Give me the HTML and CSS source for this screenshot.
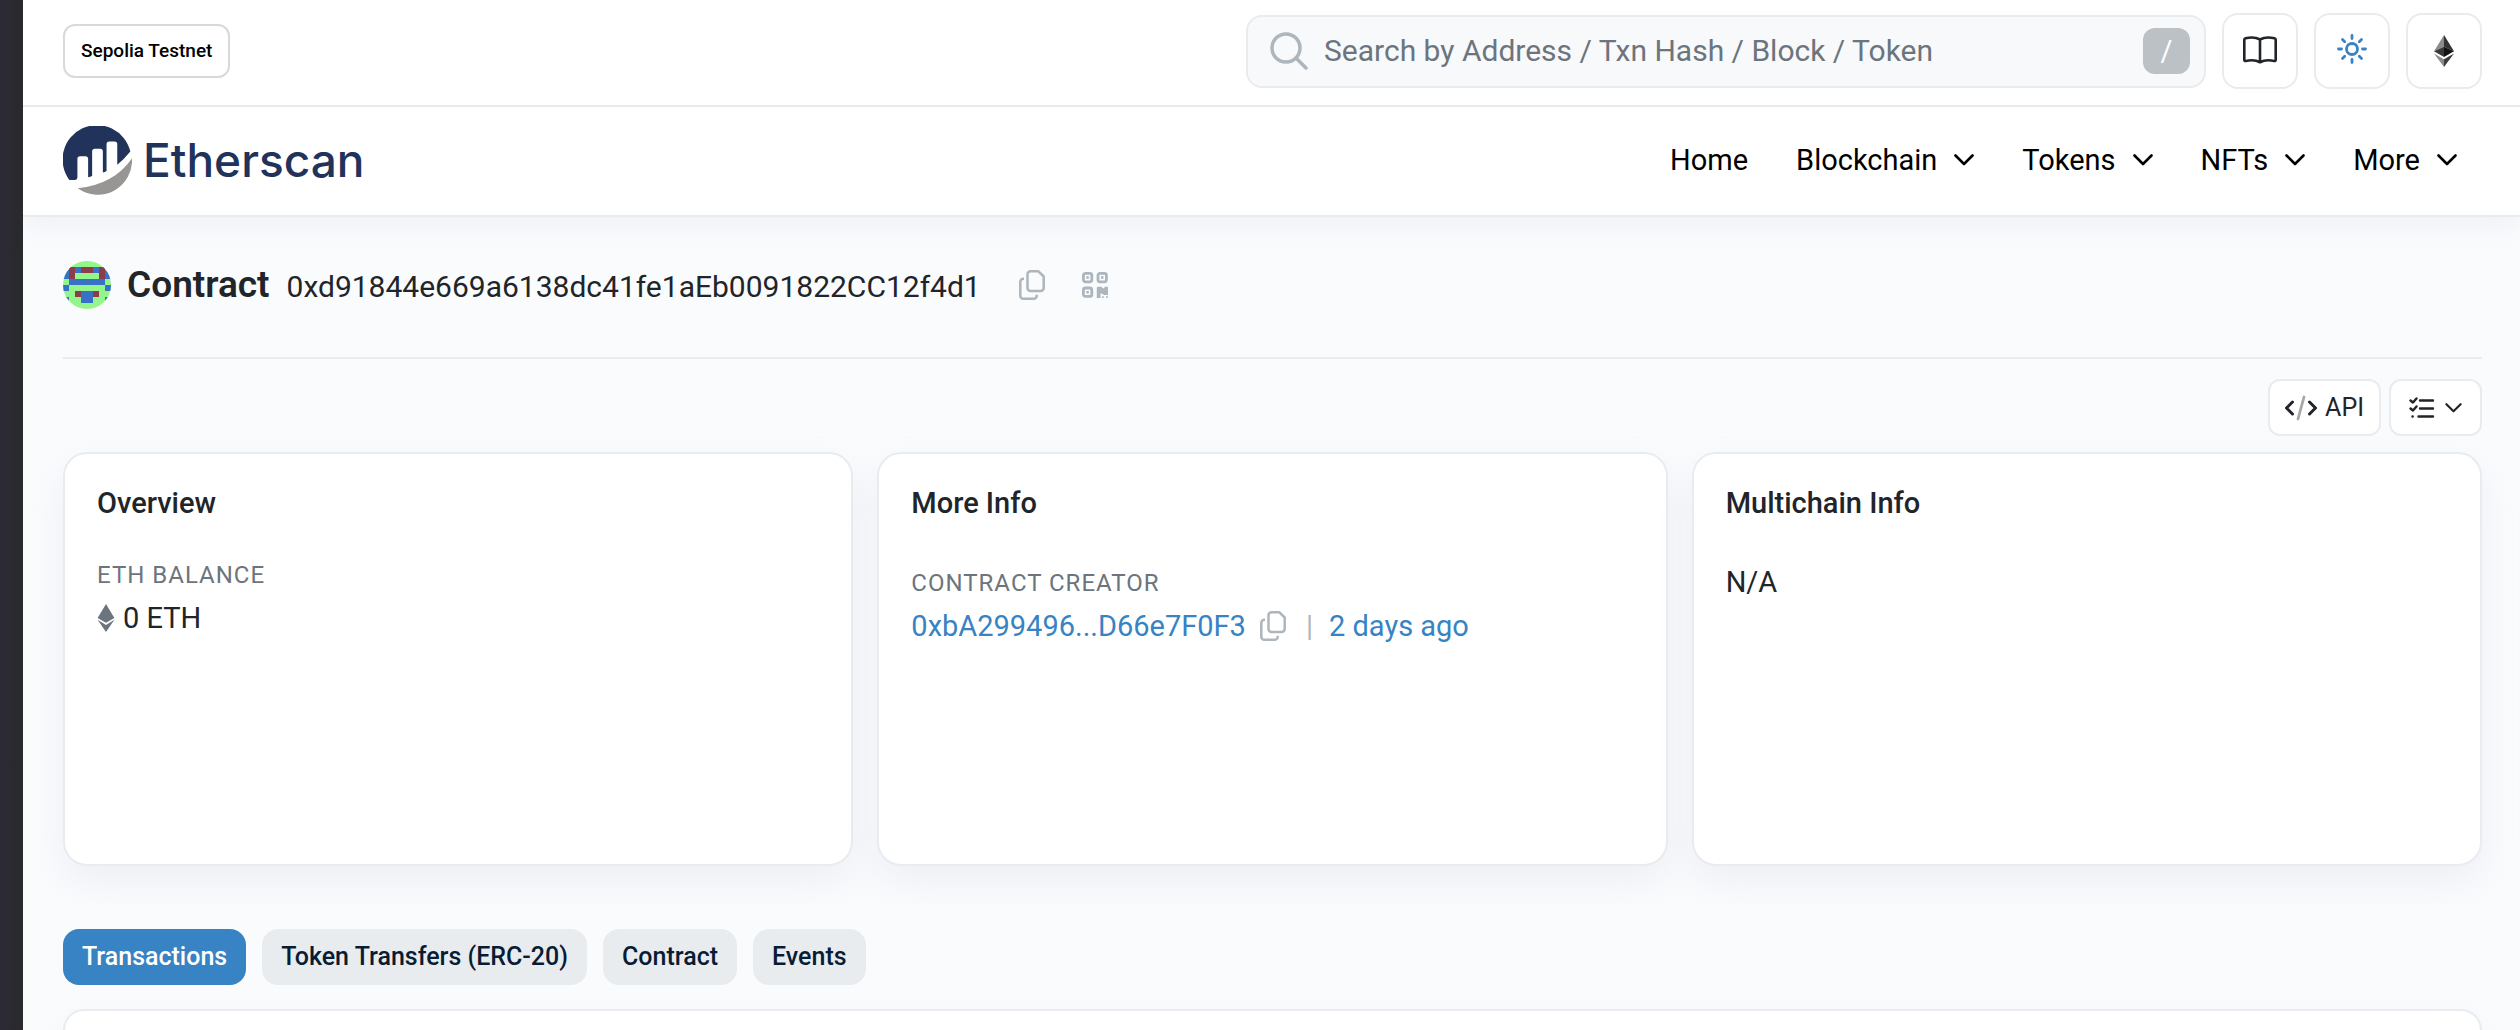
FILE: index.html
```html
<!DOCTYPE html>
<html lang="en">
<head>
<meta charset="utf-8">
<title>Contract Address | Etherscan</title>
<link rel="stylesheet" href="styles.css">
</head>
<body>
<svg class="sprite" aria-hidden="true">
  <symbol id="chevron" viewBox="0 0 20 12"><path d="M1.5 1.5 10 10l8.500-8.500" fill="none" stroke="currentColor" stroke-width="2.600" stroke-linecap="round" stroke-linejoin="round"/></symbol>
  <symbol id="copy" viewBox="0 0 26 30"><path d="M11.500 1.300h8l5.200 5.200v11.500a3 3 0 0 1-3 3H11.500a3 3 0 0 1-3-3V4.300a3 3 0 0 1 3-3zM5 8.700h-.7a3 3 0 0 0-3 3v14a3 3 0 0 0 3 3h10.400a3 3 0 0 0 3-3v-1" fill="none" stroke="currentColor" stroke-width="2.500" stroke-linejoin="round"/></symbol>
</svg>
<div class="edge"></div>
<div class="page">
  <header class="header">
    <div class="topbar">
      <span class="network">Sepolia Testnet</span>
      <div class="tools">
        <label class="search">
          <svg width="38" height="38" viewBox="0 0 38 38" fill="none" stroke="#adb5bd" stroke-width="3.500" stroke-linecap="round"><circle cx="16" cy="16" r="14"/><path d="m26 26 10 10"/></svg>
          <input type="text" placeholder="Search by Address / Txn Hash / Block / Token" aria-label="Search">
          <kbd class="key">/</kbd>
        </label>
        <button class="tool" aria-label="Docs">
          <svg width="34" height="30" viewBox="0 0 34 30" fill="none" stroke="#212529" stroke-width="2.600" stroke-linejoin="round"><path d="M17 3.500C13 1.300 7 1.300 2.500 2.300q-1.200.3-1.200 1.500v20q0 1.500 1.400 1.200C8 23.800 13 24 17 26.300c4-2.300 9-2.500 14.300-1.300q1.400.3 1.400-1.200v-20q0-1.200-1.200-1.500C27 1.300 21 1.300 17 3.500zM17 3.500v22.800"/></svg>
        </button>
        <button class="tool" aria-label="Theme">
          <svg width="30" height="34" viewBox="0 0 30 34" fill="none" stroke="#3783c3" stroke-width="2.800" stroke-linecap="round"><circle cx="15" cy="15" r="5.500"/><path d="M15 1.500v3M15 25.500v3M1.500 15h3M25.500 15h3M5.500 5.500l2.200 2.200M22.300 22.300l2.200 2.200M24.500 5.500l-2.200 2.200M7.700 22.300l-2.200 2.200"/></svg>
        </button>
        <button class="tool" aria-label="Networks">
          <svg width="20" height="32" viewBox="0 0 20 32"><path d="M10 0 0 16.300l10-4.600z" fill="#8c8c8c"/><path d="m10 0 10 16.300-10-4.600z" fill="#343434"/><path d="M10 11.700 0 16.300 10 22z" fill="#393939"/><path d="m10 11.700 10 4.600L10 22z" fill="#141414"/><path d="m0 18.500 10 5.800V32z" fill="#8c8c8c"/><path d="m20 18.500-10 5.800V32z" fill="#3c3c3b"/></svg>
        </button>
      </div>
    </div>
    <div class="navbar">
      <a class="logo" href="#">
        <svg width="69" height="69" viewBox="0 0 206 206"><path fill="#21325b" d="M19 161A102.500 102.500 0 1 1 201 76Q183 98 162 116V54q0-8-8-8h-16q-8 0-8 8v80q-5 3-11 5V76q0-8-8-8H95q-8 0-8 8v73q-6 3-12 4V98q0-8-8-8H51q-8 0-8 8v56q0 7-7 7z"/><path fill="#979695" d="M44 186Q154 173 206 96A102.500 102.500 0 0 1 44 186z"/></svg>
        <span>Etherscan</span>
      </a>
      <nav class="nav">
        <a href="#">Home</a>
        <a href="#">Blockchain <svg class="chevron"><use href="#chevron"/></svg></a>
        <a href="#">Tokens <svg class="chevron"><use href="#chevron"/></svg></a>
        <a href="#">NFTs <svg class="chevron"><use href="#chevron"/></svg></a>
        <a href="#">More <svg class="chevron"><use href="#chevron"/></svg></a>
      </nav>
    </div>
  </header>
  <main class="main">
    <div class="heading">
      <svg class="avatar" viewBox="0 0 8 8" shape-rendering="crispEdges"><path fill="#94f58a" d="M0 0h8v8H0z"/><path fill="#3872c8" d="M0 1h8v2H0zM1 3h6v1H1zM0 4h1v1H0zM7 4h1v1H7zM3 5h2v2H3zM0 6h1v1H0zM7 6h1v1H7z"/><path fill="#94f58a" d="M2 2h4v1H2z"/><path fill="#8e3b4a" d="M1 1h1v2H1zM3 1h2v1H3zM6 1h1v2H6zM2 5h1v1H2zM5 5h1v1H5z"/></svg>
      <h1>Contract</h1>
      <span class="address">0xd91844e669a6138dc41fe1aEb0091822CC12f4d1</span>
      <button class="plain" aria-label="Copy address"><svg class="copy"><use href="#copy"/></svg></button>
      <button class="plain" aria-label="Show QR code">
        <svg width="26" height="26" viewBox="0 0 26 26" fill="none" stroke="#adb5bd" stroke-width="2.800"><rect x="1.400" y="1.400" width="8.400" height="8.400" rx="2"/><rect x="16" y="1.400" width="8.400" height="8.400" rx="2"/><rect x="1.400" y="16" width="8.400" height="8.400" rx="2"/><path fill="#adb5bd" stroke="none" d="M4.300 4.300h2.500v2.500H4.300zM19 4.300h2.500v2.500H19zM4.300 19h2.500v2.500H4.300zM14.800 16q0-1.300 1.300-1.300h3.500q1 2.300 2.600 1.300l.5-1.300H26v8.300h-4q-1.500-2-3.500-1.500V26h-3.700zM20 24.300h1.700V26H20zM24 24.300h1.700V26H24z"/></svg>
      </button>
    </div>
    <div class="actions">
      <button class="action api">
        <svg width="32" height="26" viewBox="0 0 32 26" fill="none" stroke-linecap="round" stroke-linejoin="round"><path d="m7.500 7-6 6 6 6M24.500 7l6 6-6 6" stroke="#212529" stroke-width="3"/><path d="M19 2l-6 22" stroke="#a8a8a9" stroke-width="2.800"/></svg>
        API
      </button>
      <button class="action list" aria-label="View options">
        <svg width="26" height="22" viewBox="0 0 26 22" fill="none" stroke="#212529" stroke-width="2.400" stroke-linecap="round" stroke-linejoin="round"><path d="M11 3.500h13M11 11.500h13M9.500 19.500H24M1.500 3.500 4 5.500l3.500-4M1.500 11.500l2.500 2 3.500-4M3.500 19.500h.2"/></svg>
        <svg class="chevron small"><use href="#chevron"/></svg>
      </button>
    </div>
    <div class="cards">
      <section class="card">
        <h2>Overview</h2>
        <h3>ETH Balance</h3>
        <p><svg class="eth" viewBox="0 0 18 30" fill="#6c757d"><path d="m9 0 9 15-9 5-9-5zM0 17l9 5.500 9-5.500-9 13z"/></svg> 0 ETH</p>
      </section>
      <section class="card">
        <h2>More Info</h2>
        <h3 class="spaced">Contract Creator</h3>
        <p><a href="#">0xbA299496...D66e7F0F3</a><button class="plain copy-creator" aria-label="Copy creator"><svg class="copy"><use href="#copy"/></svg></button><span class="divider">|</span><a href="#">2 days ago</a></p>
      </section>
      <section class="card">
        <h2>Multichain Info</h2>
        <p>N/A</p>
      </section>
    </div>
    <div class="tabs">
      <button class="tab active">Transactions</button>
      <button class="tab">Token Transfers (ERC-20)</button>
      <button class="tab">Contract</button>
      <button class="tab">Events</button>
    </div>
    <section class="panel"></section>
  </main>
</div>
</body>
</html>
```

FILE: styles.css
```css
* { box-sizing: border-box; }

body {
  margin: 0;
  min-height: 100vh;
  display: flex;
  font-family: Roboto, "Liberation Sans", sans-serif;
  font-size: 29px;
  line-height: 44px;
  color: #212529;
  background: #fafbfd;
}

h1, h2, h3, p { margin: 0; font-weight: 500; }
p { font-weight: 400; }
a { color: #3783c3; text-decoration: none; }
button, input { font: inherit; color: inherit; }
button { cursor: pointer; }
svg { flex: none; }
.sprite { position: absolute; width: 0; height: 0; }

.edge {
  flex: none;
  width: 23px;
  background: linear-gradient(90deg, #2c2a35 0, #2b2930 14px, #2a292c 100%);
}

.page { flex: 1; min-width: 0; display: flex; flex-direction: column; overflow: hidden; }

/* Header */
.header {
  background: #fff;
  border-bottom: 2px solid #e9ecef;
  box-shadow: 0 12px 24px rgba(189, 197, 209, 0.15);
}
.topbar {
  display: flex;
  align-items: center;
  justify-content: space-between;
  padding: 13px 38px 16px 40px;
  border-bottom: 2px solid #e9ecef;
}
.network {
  padding: 13px 16px;
  border: 2px solid #d9d9d9;
  border-radius: 12px;
  font-size: 19px;
  line-height: 24px;
  font-weight: 500;
  color: #000;
}
.tools { display: flex; align-items: center; gap: 16px; width: 52%; max-width: 1236px; }
.search {
  flex: 1;
  display: flex;
  align-items: center;
  gap: 16px;
  height: 73px;
  padding: 0 14px 0 22px;
  border: 2px solid #e9ecef;
  border-radius: 16px;
  background: #f8f9fb;
}
.search input {
  flex: 1;
  min-width: 0;
  padding: 0;
  border: 0;
  outline: 0;
  background: none;
  font-size: 30px;
}
.search input::placeholder { color: #6c757d; opacity: 1; }
.key {
  width: 47px;
  height: 46px;
  border-radius: 12px;
  background: #bcc1c5;
  color: #fff;
  font: inherit;
  line-height: 46px;
  text-align: center;
}
.tool {
  display: flex;
  align-items: center;
  justify-content: center;
  width: 76px;
  height: 76px;
  padding: 0;
  border: 2px solid #e9ecef;
  border-radius: 16px;
  background: #fff;
}

.navbar {
  display: flex;
  align-items: center;
  justify-content: space-between;
  height: 108px;
  padding: 0 38px 2px 40px;
}
.logo {
  display: flex;
  align-items: center;
  gap: 11px;
  font-family: Inter, sans-serif;
  font-size: 46px;
  font-weight: 500;
  color: #21325b;
}
.nav { display: flex; padding-right: 1px; }
.nav a {
  display: flex;
  align-items: center;
  gap: 17px;
  padding: 0 24px;
  color: #000;
}
.chevron { width: 20px; height: 12px; }
.chevron.small { width: 17px; height: 10px; }

/* Contract heading */
.main { flex: 1; display: flex; flex-direction: column; padding: 0 38px 0 40px; }
.heading {
  display: flex;
  align-items: center;
  height: 142px;
  padding-bottom: 4px;
  border-bottom: 2px solid #e9ecef;
}
.avatar { width: 48px; height: 48px; border-radius: 50%; }
h1 { margin: 0 17px 0 16px; font-size: 37px; font-weight: 600; }
.address { margin-right: 38px; font-size: 30px; padding-top: 3px; }
.plain { display: flex; padding: 0; border: 0; background: none; color: #adb5bd; }
.plain + .plain { margin-left: 37px; }
.copy { width: 26px; height: 30px; }

.actions { display: flex; justify-content: flex-end; gap: 8px; padding: 20px 0 16px; }
.action {
  display: flex;
  align-items: center;
  height: 57px;
  border: 2px solid #e9ecef;
  border-radius: 12px;
  background: #fff;
  font-size: 25px;
}
.api { gap: 8px; padding: 0 15px; }
.list { gap: 10px; padding: 0 18px; }

/* Info cards */
.cards { display: grid; grid-template-columns: repeat(3, 1fr); gap: 24px; }
.card {
  min-height: 414px;
  padding: 27px 32px;
  border: 2px solid #e9ecef;
  border-radius: 24px;
  background: #fff;
  box-shadow: 0 16px 38px rgba(189, 197, 209, 0.2);
}
h2 { margin-bottom: 32px; font-size: 29px; line-height: 44px; }
h3 {
  font-size: 24px;
  line-height: 36px;
  font-weight: 400;
  letter-spacing: 1px;
  text-transform: uppercase;
  color: #6c757d;
}
.spaced { margin-top: 40px; }
.card p { display: flex; align-items: center; line-height: 50px; }
.eth { width: 18px; height: 28px; margin-right: 8px; }
.copy-creator { margin-left: 14px; }
.divider { margin: 0 16px 0 20px; color: #adb5bd; }

/* Tabs */
.tabs { display: flex; gap: 16px; margin: 63px 0 24px; }
.tab {
  height: 56px;
  padding: 0 19px;
  border: 0;
  border-radius: 16px;
  background: #e9ecef;
  color: #081d35;
  font-size: 25px;
  font-weight: 500;
}
.tab.active { background: #3783c3; color: #fff; }
.panel {
  flex: 1;
  border: 2px solid #e9ecef;
  border-bottom: 0;
  border-radius: 24px 24px 0 0;
  background: #fff;
  box-shadow: 0 16px 38px rgba(189, 197, 209, 0.2);
}
```
